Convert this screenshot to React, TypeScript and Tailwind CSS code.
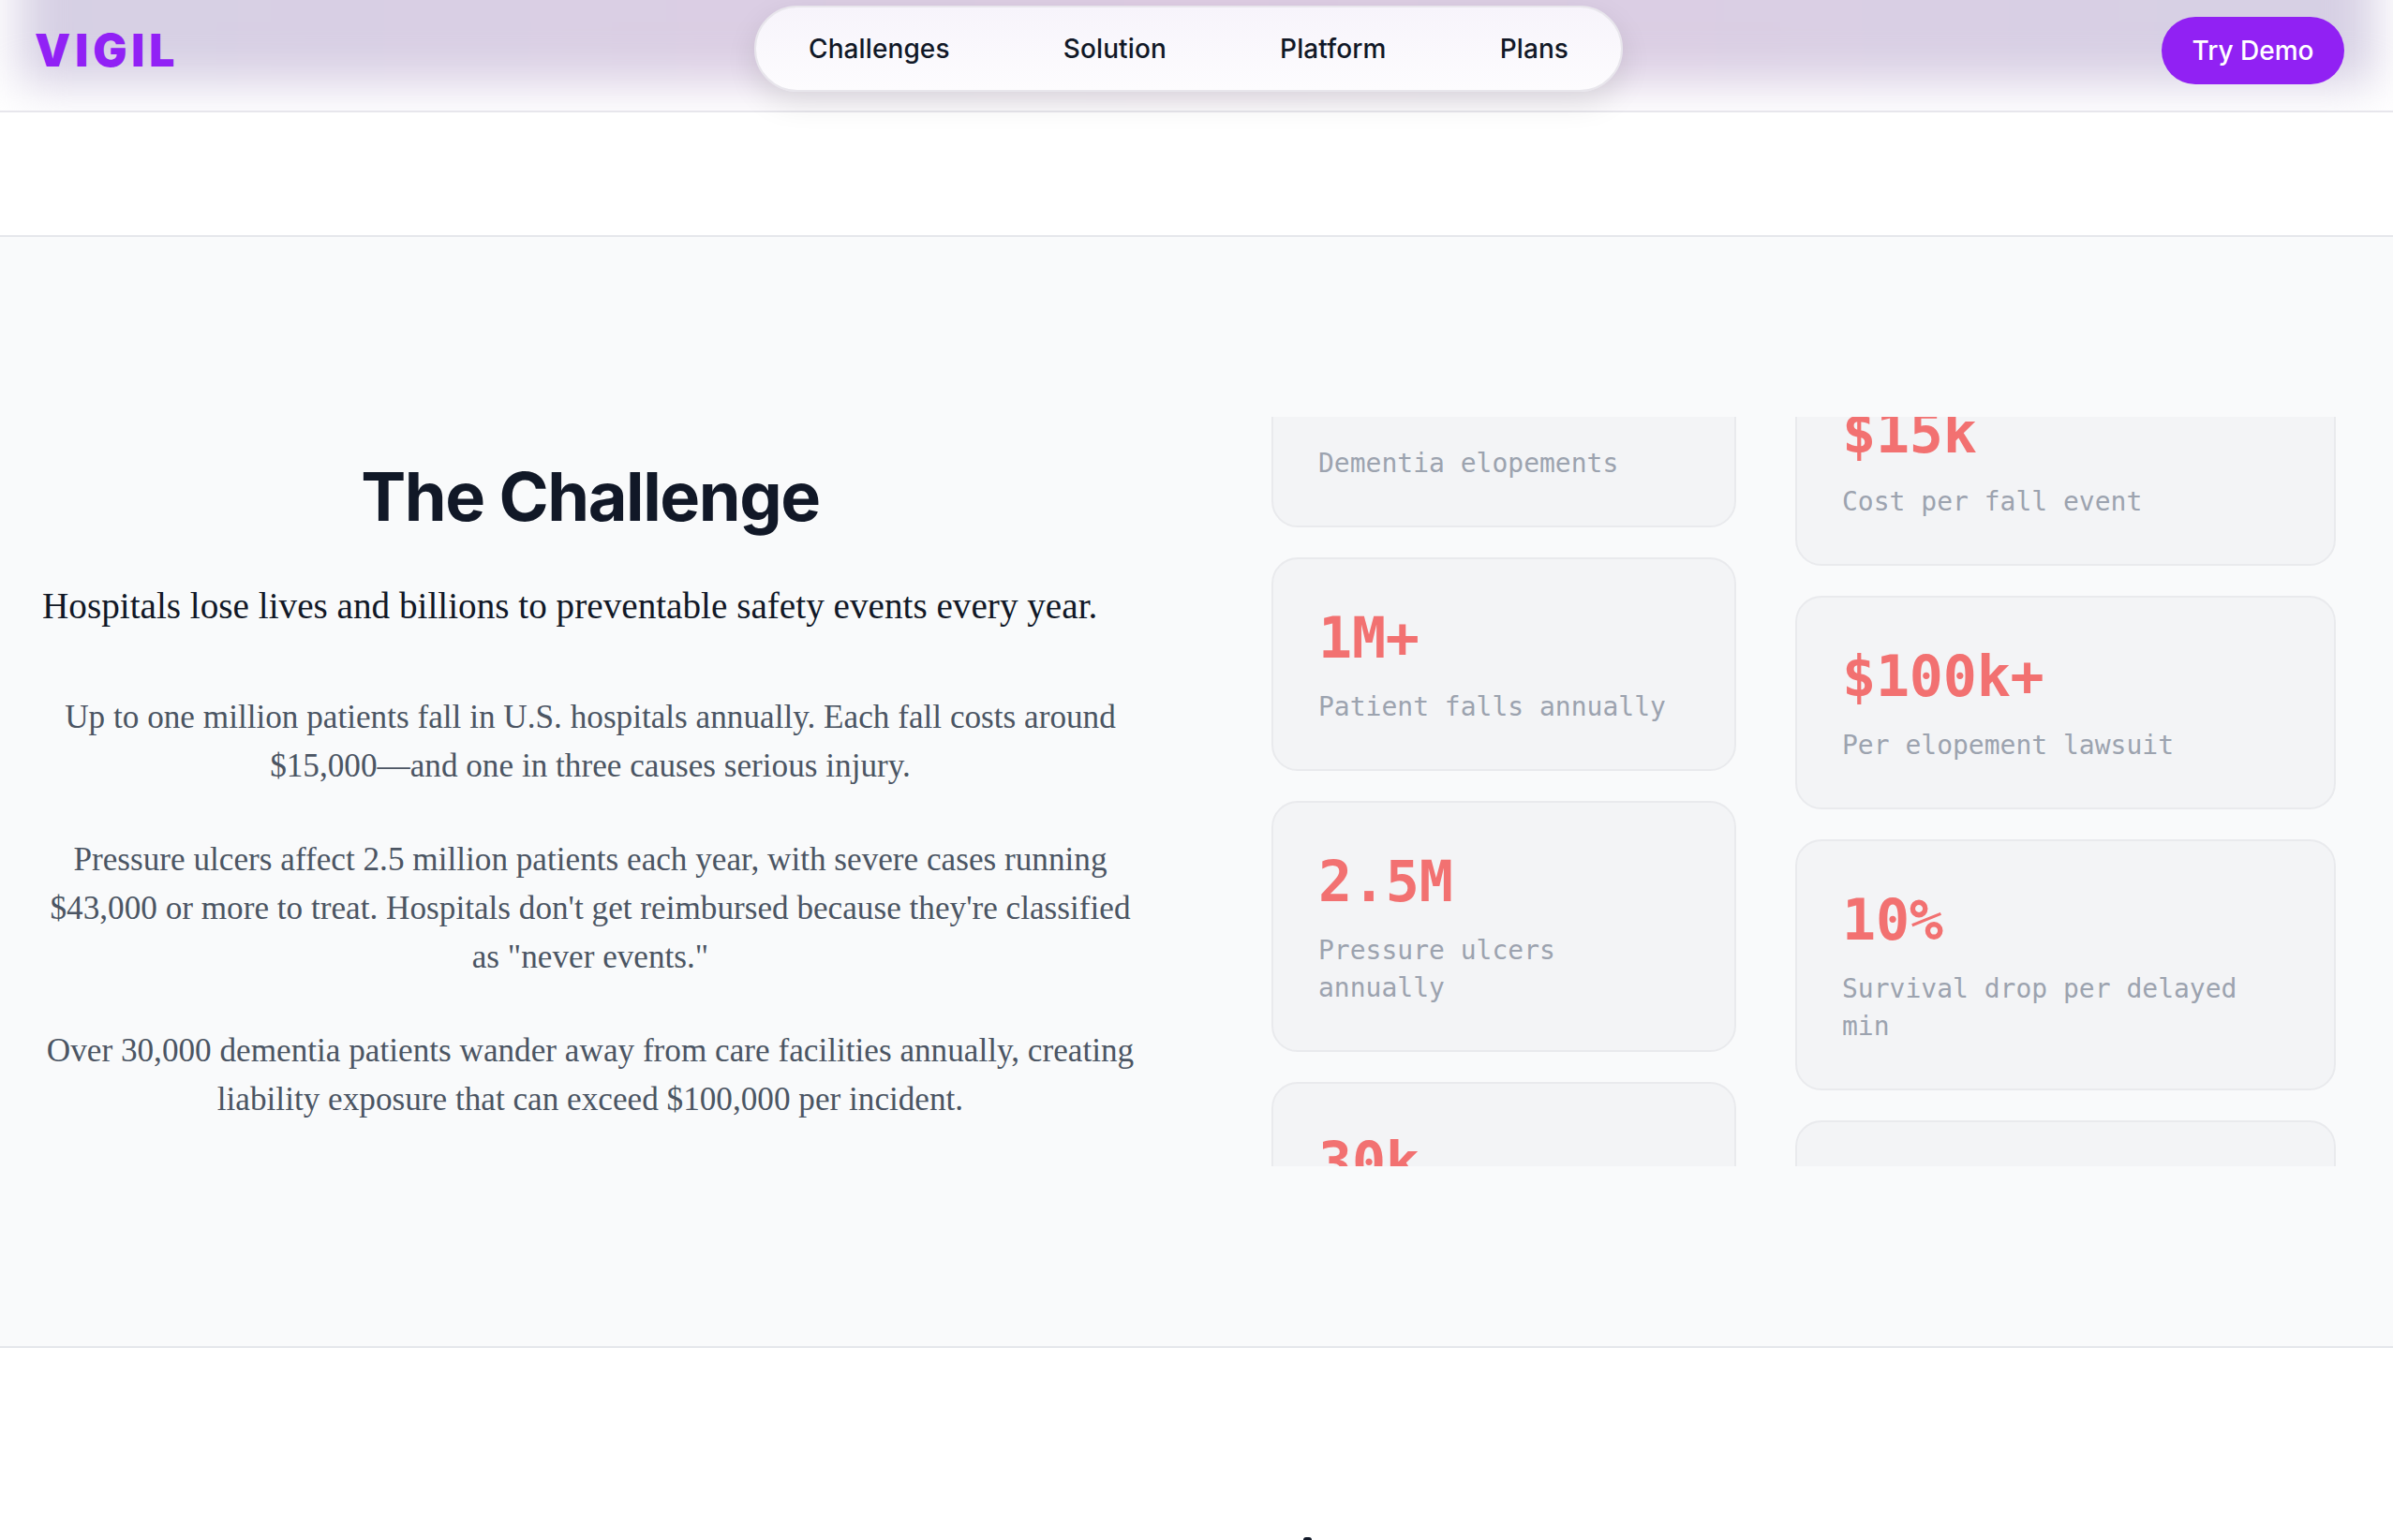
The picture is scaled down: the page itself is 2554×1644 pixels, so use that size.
const mono = "font-['DejaVu_Sans_Mono','Liberation_Mono',monospace]";

function Card({ value, label, width }: { value: string; label: React.ReactNode; width: string }) {
  return (
    <div className={`${width} rounded-[28px] border-2 border-[#e9eaed] bg-[#f3f4f6] px-12 pt-12 pb-[46px] ${mono}`}>
      <div className="mb-[18px] text-[60px] leading-[72px] font-bold tracking-[-0.2px] text-[#f27171]">{value}</div>
      <div className="text-[28px] leading-10 text-[#9ca3af]">{label}</div>
    </div>
  );
}

export default function App() {
  const serif = "font-['Liberation_Serif',serif]";
  return (
    <div className="relative h-[1644px] w-full overflow-hidden bg-white font-['Inter',sans-serif]">
      <header className="relative z-10 h-[120px] overflow-visible border-b-2 border-[#e7e6ec] bg-white">
        <div className="absolute inset-0 overflow-hidden">
          <div className="absolute top-[-70px] right-[20px] left-[20px] h-[160px] bg-gradient-to-r from-[#d6d0e4] via-[#decde3] to-[#d6d0e4] blur-[24px]" />
        </div>
        <div className="relative flex h-full items-center justify-between pr-[52px] pb-[10px] pl-[37px]">
          <div className="text-[48px] leading-none font-black tracking-[5px] text-[#9121f5]">VIGIL</div>
          <nav className="absolute top-[6px] left-[805px] flex h-[92px] w-[927px] items-center justify-between rounded-full border-2 border-[#e8e6ec] bg-gradient-to-b from-[#f7f4fb] to-[#fdfcfe] px-[56px] text-[28px] font-medium tracking-[0.1px] text-[#111827] shadow-[0_12px_32px_rgba(0,0,0,0.1)]">
            <span>Challenges</span>
            <span>Solution</span>
            <span>Platform</span>
            <span>Plans</span>
          </nav>
          <button className="flex h-[72px] w-[195px] items-center justify-center rounded-full bg-[#9121f3] text-[28px] font-medium text-white">
            Try Demo
          </button>
        </div>
      </header>

      <div className="h-[131px]" />

      <section className="flex h-[1188px] gap-[142px] border-y-2 border-[#e5e7eb] bg-[#f9fafb] pt-[192px] pl-[45px]">
        <div className="flex h-[800px] w-[1170px] shrink-0 flex-col items-center justify-center text-center">
          <h2 className="mb-[49px] text-[72px] leading-[80px] font-bold tracking-[-1.4px] text-[#111827]">The Challenge</h2>
          <p className={`mb-[65px] self-start text-[39.2px] leading-[56px] whitespace-nowrap text-[#111827] ${serif}`}>
            Hospitals lose lives and billions to preventable safety events every year.
          </p>
          <div className={`flex flex-col gap-[48px] text-[35.2px] leading-[52px] whitespace-nowrap text-[#4b5563] ${serif}`}>
            <p>
              Up to one million patients fall in U.S. hospitals annually. Each fall costs around
              <br />
              $15,000—and one in three causes serious injury.
            </p>
            <p>
              Pressure ulcers affect 2.5 million patients each year, with severe cases running
              <br />
              $43,000 or more to treat. Hospitals don't get reimbursed because they're classified
              <br />
              as "never events."
            </p>
            <p>
              Over 30,000 dementia patients wander away from care facilities annually, creating
              <br />
              liability exposure that can exceed $100,000 per incident.
            </p>
          </div>
        </div>
        <div className="flex h-[800px] items-start gap-[63px] overflow-hidden">
          <div className="-mt-[110px] flex flex-col gap-8">
            <Card width="w-[496px]" value="30k" label="Dementia elopements" />
            <Card width="w-[496px]" value="1M+" label="Patient falls annually" />
            <Card width="w-[496px]" value="2.5M" label={<>Pressure ulcers<br />annually</>} />
            <Card width="w-[496px]" value="30k" label="Dementia elopements" />
          </div>
          <div className="-mt-[69px] flex flex-col gap-8">
            <Card width="w-[577px]" value="$15k" label="Cost per fall event" />
            <Card width="w-[577px]" value="$100k+" label="Per elopement lawsuit" />
            <Card width="w-[577px]" value="10%" label={<>Survival drop per delayed<br />min</>} />
            <Card width="w-[577px]" value="$43k" label="Per severe pressure ulcer" />
          </div>
        </div>
      </section>

      <div className="mt-[202px] ml-[1391px] h-[3px] w-[9px] rounded-t-full bg-[#111827]" />
    </div>
  );
}
